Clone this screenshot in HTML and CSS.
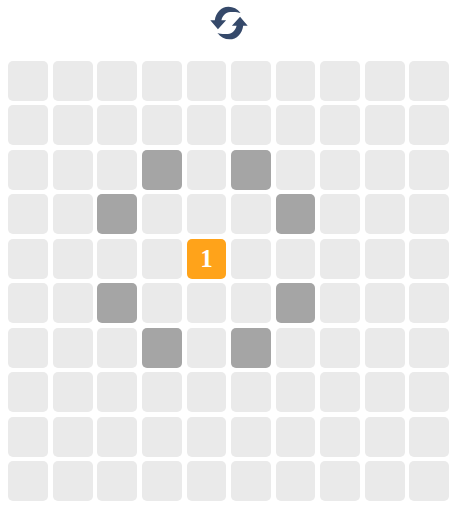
FILE: index.html
```html
<!DOCTYPE html>
<html lang="en">
<head>
    <meta charset="UTF-8">
    <meta name="viewport" content="width=device-width, initial-scale=1.0">
    <title>Knight moves</title>
    <link rel="stylesheet" href="styles.css">
</head>
<body>
    <div class="toolbar">
        <button class="reset" aria-label="Restart">
            <svg width="40" height="40" viewBox="1 1 38 38">
                <path d="M31 10.500C28 6.500 24 4.500 19.500 4.500C12.500 4.500 7.500 10 6.500 17.500H2.250L9.500 26L17.250 17.500H12.800C13.800 13 17 10 21 9.600C25 9.200 28.500 9.600 31 10.500Z"/>
                <path transform="rotate(180 20 20)" d="M31 10.500C28 6.500 24 4.500 19.500 4.500C12.500 4.500 7.500 10 6.500 17.500H2.250L9.500 26L17.250 17.500H12.800C13.800 13 17 10 21 9.600C25 9.200 28.500 9.600 31 10.500Z"/>
            </svg>
        </button>
    </div>
    <div class="board">
        <div class="cell"></div><div class="cell"></div><div class="cell"></div><div class="cell"></div><div class="cell"></div><div class="cell"></div><div class="cell"></div><div class="cell"></div><div class="cell"></div><div class="cell"></div>
        <div class="cell"></div><div class="cell"></div><div class="cell"></div><div class="cell"></div><div class="cell"></div><div class="cell"></div><div class="cell"></div><div class="cell"></div><div class="cell"></div><div class="cell"></div>
        <div class="cell"></div><div class="cell"></div><div class="cell"></div><div class="cell move"></div><div class="cell"></div><div class="cell move"></div><div class="cell"></div><div class="cell"></div><div class="cell"></div><div class="cell"></div>
        <div class="cell"></div><div class="cell"></div><div class="cell move"></div><div class="cell"></div><div class="cell"></div><div class="cell"></div><div class="cell move"></div><div class="cell"></div><div class="cell"></div><div class="cell"></div>
        <div class="cell"></div><div class="cell"></div><div class="cell"></div><div class="cell"></div><div class="cell current">1</div><div class="cell"></div><div class="cell"></div><div class="cell"></div><div class="cell"></div><div class="cell"></div>
        <div class="cell"></div><div class="cell"></div><div class="cell move"></div><div class="cell"></div><div class="cell"></div><div class="cell"></div><div class="cell move"></div><div class="cell"></div><div class="cell"></div><div class="cell"></div>
        <div class="cell"></div><div class="cell"></div><div class="cell"></div><div class="cell move"></div><div class="cell"></div><div class="cell move"></div><div class="cell"></div><div class="cell"></div><div class="cell"></div><div class="cell"></div>
        <div class="cell"></div><div class="cell"></div><div class="cell"></div><div class="cell"></div><div class="cell"></div><div class="cell"></div><div class="cell"></div><div class="cell"></div><div class="cell"></div><div class="cell"></div>
        <div class="cell"></div><div class="cell"></div><div class="cell"></div><div class="cell"></div><div class="cell"></div><div class="cell"></div><div class="cell"></div><div class="cell"></div><div class="cell"></div><div class="cell"></div>
        <div class="cell"></div><div class="cell"></div><div class="cell"></div><div class="cell"></div><div class="cell"></div><div class="cell"></div><div class="cell"></div><div class="cell"></div><div class="cell"></div><div class="cell"></div>
    </div>
</body>
</html>
```

FILE: styles.css
```css
body {
    margin: 0;
    padding: 2.5px 5.9px 0 8.4px;
    background-color: #fff;
    font-family: "Liberation Serif", serif;
}

.toolbar {
    display: flex;
    justify-content: center;
    height: 58.3px;
}

.reset {
    width: 40px;
    height: 40px;
    padding: 0;
    border: none;
    background: none;
}

.reset svg {
    display: block;
    fill: #35496a;
}

.board {
    display: grid;
    grid-template-columns: repeat(10, 39.9px);
    grid-auto-rows: 39.9px;
    gap: 4.6px 4.65px;
}

.cell {
    display: flex;
    align-items: center;
    justify-content: center;
    border-radius: 5px;
    background-color: #eaeaea;
}

.move {
    background-color: #a5a5a5;
}

.current {
    background-color: #ffa31a;
    color: #fff;
    font-size: 25px;
    font-weight: bold;
}
```
